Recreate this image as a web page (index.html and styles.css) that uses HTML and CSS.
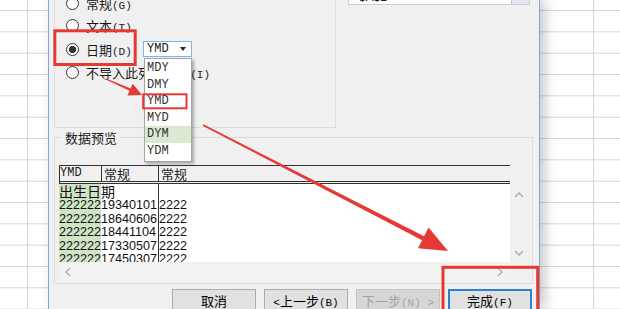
FILE: index.html
```html
<!DOCTYPE html>
<html lang="zh-CN">
<head>
    <meta charset="UTF-8">
    <meta name="viewport" content="width=device-width, initial-scale=1.0">
    <title>文本导入向导 - 第 3 步</title>
    <link rel="stylesheet" href="styles.css">
</head>
<body>
    <div class="sheet sheet-left"></div>

    <div class="wizard">
        <div class="top-row">
            <div class="format-box">
                <label class="radio-row row-first"><span class="radio"></span><span>常规<span class="k">(G)</span></span></label>
                <label class="radio-row"><span class="radio"></span><span>文本<span class="k">(T)</span></span></label>
                <div class="radio-row row-date">
                    <span class="radio checked"></span>
                    <span class="date-label">日期<span class="k">(D)</span></span>
                    <div class="combo">
                        <span class="combo-value">YMD</span>
                        <span class="combo-arrow"></span>
                        <ul class="combo-list">
                            <li>MDY</li>
                            <li>DMY</li>
                            <li>YMD</li>
                            <li>MYD</li>
                            <li class="hover">DYM</li>
                            <li>YDM</li>
                        </ul>
                    </div>
                </div>
                <label class="radio-row row-skip"><span class="radio"></span><span>不导入此列<span class="k">(</span>跳过<span class="k">)(I)</span></span></label>
            </div>
            <div class="target">
                <span class="target-text">$A$1</span>
                <span class="target-btn"></span>
            </div>
        </div>

        <fieldset class="preview">
            <legend>数据预览</legend>
            <div class="grid">
                <div class="grid-head">
                    <div class="hc hc1">YMD</div>
                    <div class="hc hc2">常规</div>
                    <div class="hc hc3">常规</div>
                </div>
                <div></div>
                <div class="grid-body">
                    <div class="gr gr-title"><div class="gc1">出生日期</div><div class="gc2"></div><div class="gc3"></div></div>
                    <div class="gr"><div class="gc1">222222</div><div class="gc2">19340101</div><div class="gc3">2222</div></div>
                    <div class="gr"><div class="gc1">222222</div><div class="gc2">18640606</div><div class="gc3">2222</div></div>
                    <div class="gr"><div class="gc1">222222</div><div class="gc2">18441104</div><div class="gc3">2222</div></div>
                    <div class="gr"><div class="gc1">222222</div><div class="gc2">17330507</div><div class="gc3">2222</div></div>
                    <div class="gr"><div class="gc1">222222</div><div class="gc2">17450307</div><div class="gc3">2222</div></div>
                </div>
                <div class="vscroll">
                    <svg width="10" height="6" viewBox="0 0 10 6"><polyline points="1,5 5,1 9,5" /></svg>
                    <svg width="10" height="6" viewBox="0 0 10 6"><polyline points="1,1 5,5 9,1" /></svg>
                </div>
                <div class="hscroll">
                    <svg width="6" height="10" viewBox="0 0 6 10"><polyline points="5,1 1,5 5,9" /></svg>
                    <svg width="6" height="10" viewBox="0 0 6 10"><polyline points="1,1 5,5 1,9" /></svg>
                </div>
                <div></div>
            </div>
        </fieldset>

        <div class="buttons">
            <button class="btn">取消</button>
            <button class="btn"><span class="k">&lt;</span>上一步<span class="k">(B)</span></button>
            <button class="btn btn-disabled">下一步<span class="k">(N) &gt;</span></button>
            <button class="btn btn-default">完成<span class="k">(F)</span></button>
        </div>
    </div>

    <div class="sheet sheet-right"></div>

    <!-- red annotation marks drawn over the screenshot -->
    <svg class="marks" width="620" height="309" viewBox="0 0 620 309">
        <rect x="54.8" y="30.8" width="80.4" height="33.7" />
        <rect x="143.2" y="94.3" width="43.3" height="14" class="thin" />
        <rect x="443" y="267.3" width="94.7" height="50" />
        <polygon class="fill" points="106.2,78.5 130.6,88.6 132.7,83.8 142,95 127.5,95.6 129.6,90.8 105.8,79.5" />
        <polygon class="fill" points="203.4,124.3 424.1,236.3 428.6,227.6 448,251 418,248.2 422.1,240.3 202.6,125.7" />
    </svg>
</body>
</html>
```

FILE: styles.css
```css
* {
    box-sizing: border-box;
}

body {
    margin: 0;
    width: 620px;
    height: 309px;
    overflow: hidden;
    display: flex;
    position: relative;
    background-color: #fff;
    font-family: "Liberation Serif", "Noto Sans CJK SC", serif;
    font-size: 13px;
    color: #1a1a1a;
}

/* spreadsheet behind the dialog */
.sheet {
    height: 309px;
    background-color: #fff;
    background-repeat: no-repeat, repeat;
    background-size: 100% 100%, 100% 21.33px;
    background-position: 0 0, 0 -10.33px;
}

.sheet-left {
    width: 48px;
    flex: none;
    background-image:
        linear-gradient(to right, transparent 27px, #d6d6d6 27px, #d6d6d6 28px, transparent 28px),
        linear-gradient(to bottom, transparent 20.33px, #d6d6d6 20.33px);
}

.sheet-right {
    flex: 1;
    background-image:
        linear-gradient(to right, transparent 53px, #d6d6d6 53px, #d6d6d6 54px, transparent 54px),
        linear-gradient(to bottom, transparent 20.33px, #d6d6d6 20.33px);
}

/* wizard dialog */
.wizard {
    width: 492px;
    flex: none;
    height: 309px;
    display: flex;
    flex-direction: column;
    background-color: #f0f0f0;
    border-left: 1px solid #7ea6d6;
    border-right: 1px solid #7ea6d6;
    position: relative;
    z-index: 1;
    box-shadow: 5px 0 12px rgba(0, 0, 0, 0.22);
}

.k {
    font-family: "Liberation Mono", monospace;
    font-size: 11px;
}

.top-row {
    display: flex;
    align-items: flex-start;
    margin-top: -9px;
}

.format-box {
    width: 282px;
    height: 137px;
    margin-left: 5px;
    padding-left: 11px;
    border: 1px solid #dcdcdc;
}

.radio-row {
    display: flex;
    align-items: center;
    height: 22px;
    white-space: nowrap;
}

.row-date {
    height: 26px;
}

.row-skip {
    height: 20px;
}

.radio {
    width: 13px;
    height: 13px;
    flex: none;
    margin-right: 7px;
    border: 1px solid #333;
    border-radius: 50%;
    background-color: #fff;
}

.radio.checked {
    background: radial-gradient(circle, #333 0, #333 3.3px, #fff 3.9px);
}

.date-label {
    width: 57px;
    flex: none;
}

.combo {
    width: 49px;
    height: 16px;
    display: flex;
    align-items: center;
    padding-left: 3px;
    border: 1px solid #7eb4ea;
    background-color: #fff;
    font-family: "Liberation Mono", monospace;
    font-size: 12px;
    position: relative;
}

.combo-arrow {
    margin-left: 11px;
    border-left: 3.5px solid transparent;
    border-right: 3.5px solid transparent;
    border-top: 4px solid #222;
}

.combo-list {
    position: absolute;
    top: 16px;
    left: 0;
    width: 48px;
    margin: 0;
    padding: 1px 0;
    list-style-type: none;
    background-color: #fff;
    border: 1px solid #a5a5a5;
    box-shadow: 2px 2px 3px rgba(0, 0, 0, 0.3);
    z-index: 2;
}

.combo-list li {
    height: 16.6px;
    line-height: 16.6px;
    padding-left: 2px;
    color: #333;
}

.combo-list li.hover {
    background-color: #d9e9d2;
}

.target {
    width: 182px;
    height: 21px;
    margin-left: 12px;
    margin-top: -7px;
    display: flex;
    align-items: center;
    justify-content: space-between;
    padding-left: 10px;
    background-color: #fff;
    border: 1px solid #cfcfcf;
    font-family: "Liberation Sans", sans-serif;
    font-size: 12px;
}

.target-text {
    margin-top: 4px;
}

.target-btn {
    width: 18px;
    height: 19px;
    background-color: #e3e8f0;
    border-left: 1px solid #b9c4d4;
}

/* preview */
.preview {
    margin: 2px 6px 0 5px;
    padding: 0 4px 1px 4px;
    border: 1px solid #dcdcdc;
    min-width: 0;
}

.preview legend {
    margin-left: 3px;
    padding: 0 3px;
    font-family: "Noto Sans CJK SC", sans-serif;
    font-size: 13px;
    line-height: 15px;
}

.grid {
    margin-top: 20px;
    display: grid;
    grid-template-columns: 451px 18px;
    grid-template-rows: 19px 78px 20px;
}

.grid-head {
    display: flex;
    border-top: 1px solid #333;
    border-left: 1px solid #333;
    border-bottom: 3px double #333;
    background-color: #f0f0f0;
}

.hc {
    line-height: 15px;
    white-space: nowrap;
    font-family: "Noto Sans CJK SC", sans-serif;
}

.hc1 {
    width: 42px;
    border-right: 1px solid #333;
    font-family: "Liberation Mono", monospace;
    font-size: 12px;
}

.hc2 {
    width: 57px;
    padding-left: 2px;
    border-right: 1px solid #333;
}

.hc3 {
    padding-left: 2px;
}

.grid-body {
    background-color: #fff;
    overflow: hidden;
}

.gr {
    display: flex;
    height: 13.4px;
    line-height: 13.4px;
    font-family: "Liberation Sans", sans-serif;
    font-size: 12.6px;
    color: #111;
    white-space: nowrap;
}

.gr-title {
    height: 15.4px;
    line-height: 15.4px;
    font-family: "Noto Sans CJK SC", sans-serif;
    font-size: 14px;
}

.gc1 {
    width: 42px;
    flex: none;
    background-color: #cfe3c5;
}

.gc2 {
    width: 57px;
    flex: none;
}

.gc3 {
    flex: 1;
    border-left: 1px solid #333;
}

.vscroll {
    display: flex;
    flex-direction: column;
    justify-content: space-between;
    align-items: center;
    padding: 8px 0 6px;
    background-color: #f0f0f0;
}

.hscroll {
    display: flex;
    justify-content: space-between;
    align-items: center;
    padding: 0 7px 0 6px;
    background-color: #f2f2f2;
}

.vscroll polyline,
.hscroll polyline {
    fill: none;
    stroke: #a8a8a8;
    stroke-width: 1.3;
}

/* buttons */
.buttons {
    display: flex;
    justify-content: flex-end;
    gap: 8px;
    margin-top: 5px;
    padding-right: 7px;
}

.btn {
    width: 84px;
    height: 23px;
    flex: none;
    padding: 0;
    border: 1px solid #adadad;
    background-color: #e1e1e1;
    font-family: "Liberation Serif", "Noto Sans CJK SC", serif;
    font-size: 13px;
    color: #000;
}

.btn-disabled {
    color: #a3a3a3;
    background-color: #d6d6d6;
    border-color: #c4c4c4;
}

.btn-default {
    border: 2px solid #2f7fd6;
}

/* annotations */
.marks {
    position: absolute;
    left: 0;
    top: 0;
    z-index: 5;
    pointer-events: none;
}

.marks rect {
    fill: none;
    stroke: #e53935;
    stroke-width: 3;
}

.marks rect.thin {
    stroke-width: 2;
}

.marks .fill {
    fill: #e53935;
}
```
